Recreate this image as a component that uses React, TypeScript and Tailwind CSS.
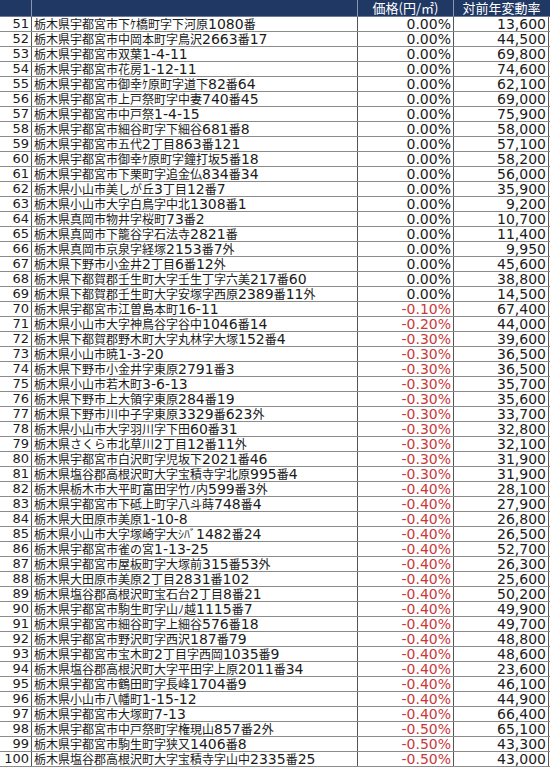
const rows: [number, string, string, string][] = [
  [51, "栃木県宇都宮市下ｹ橋町字下河原1080番", "0.00%", "13,600"],
  [52, "栃木県宇都宮市中岡本町字鳥沢2663番17", "0.00%", "44,500"],
  [53, "栃木県宇都宮市双葉1-4-11", "0.00%", "69,800"],
  [54, "栃木県宇都宮市花房1-12-11", "0.00%", "74,600"],
  [55, "栃木県宇都宮市御幸ｹ原町字道下82番64", "0.00%", "62,100"],
  [56, "栃木県宇都宮市上戸祭町字中妻740番45", "0.00%", "69,000"],
  [57, "栃木県宇都宮市中戸祭1-4-15", "0.00%", "75,900"],
  [58, "栃木県宇都宮市細谷町字下細谷681番8", "0.00%", "58,000"],
  [59, "栃木県宇都宮市五代2丁目863番121", "0.00%", "57,100"],
  [60, "栃木県宇都宮市御幸ｹ原町字鐘打坂5番18", "0.00%", "58,200"],
  [61, "栃木県宇都宮市下栗町字追金仏834番34", "0.00%", "56,000"],
  [62, "栃木県小山市美しが丘3丁目12番7", "0.00%", "35,900"],
  [63, "栃木県小山市大字白鳥字中北1308番1", "0.00%", "9,200"],
  [64, "栃木県真岡市物井字桜町73番2", "0.00%", "10,700"],
  [65, "栃木県真岡市下籠谷字石法寺2821番", "0.00%", "11,400"],
  [66, "栃木県真岡市京泉字経塚2153番7外", "0.00%", "9,950"],
  [67, "栃木県下野市小金井2丁目6番12外", "0.00%", "45,600"],
  [68, "栃木県下都賀郡壬生町大字壬生丁字六美217番60", "0.00%", "38,800"],
  [69, "栃木県下都賀郡壬生町大字安塚字西原2389番11外", "0.00%", "14,500"],
  [70, "栃木県宇都宮市江曽島本町16-11", "-0.10%", "67,400"],
  [71, "栃木県小山市大字神鳥谷字谷中1046番14", "-0.20%", "44,000"],
  [72, "栃木県下都賀郡野木町大字丸林字大塚152番4", "-0.30%", "39,600"],
  [73, "栃木県小山市暁1-3-20", "-0.30%", "36,500"],
  [74, "栃木県下野市小金井字東原2791番3", "-0.30%", "36,500"],
  [75, "栃木県小山市若木町3-6-13", "-0.30%", "35,700"],
  [76, "栃木県下野市上大領字東原284番19", "-0.30%", "35,600"],
  [77, "栃木県下野市川中子字東原3329番623外", "-0.30%", "33,700"],
  [78, "栃木県小山市大字羽川字下田60番31", "-0.30%", "32,800"],
  [79, "栃木県さくら市北草川2丁目12番11外", "-0.30%", "32,100"],
  [80, "栃木県宇都宮市白沢町字児坂下2021番46", "-0.30%", "31,900"],
  [81, "栃木県塩谷郡高根沢町大字宝積寺字北原995番4", "-0.30%", "31,900"],
  [82, "栃木県栃木市大平町富田字竹ﾉ内599番3外", "-0.40%", "28,100"],
  [83, "栃木県宇都宮市下砥上町字八斗蒔748番4", "-0.40%", "27,900"],
  [84, "栃木県大田原市美原1-10-8", "-0.40%", "26,800"],
  [85, "栃木県小山市大字塚崎字大ｼﾊﾞ1482番24", "-0.40%", "26,500"],
  [86, "栃木県宇都宮市雀の宮1-13-25", "-0.40%", "52,700"],
  [87, "栃木県宇都宮市屋板町字大塚前315番53外", "-0.40%", "26,300"],
  [88, "栃木県大田原市美原2丁目2831番102", "-0.40%", "25,600"],
  [89, "栃木県塩谷郡高根沢町宝石台2丁目8番21", "-0.40%", "50,200"],
  [90, "栃木県宇都宮市駒生町字山ﾉ越1115番7", "-0.40%", "49,900"],
  [91, "栃木県宇都宮市細谷町字上細谷576番18", "-0.40%", "49,700"],
  [92, "栃木県宇都宮市野沢町字西沢187番79", "-0.40%", "48,800"],
  [93, "栃木県宇都宮市宝木町2丁目字西岡1035番9", "-0.40%", "48,600"],
  [94, "栃木県塩谷郡高根沢町大字平田字上原2011番34", "-0.40%", "23,600"],
  [95, "栃木県宇都宮市鶴田町字長峰1704番9", "-0.40%", "46,100"],
  [96, "栃木県小山市八幡町1-15-12", "-0.40%", "44,900"],
  [97, "栃木県宇都宮市大塚町7-13", "-0.40%", "66,400"],
  [98, "栃木県宇都宮市中戸祭町字権現山857番2外", "-0.50%", "65,100"],
  [99, "栃木県宇都宮市駒生町字狭又1406番8", "-0.50%", "43,300"],
  [100, "栃木県塩谷郡高根沢町大字宝積寺字山中2335番25", "-0.50%", "43,000"],
];

// kanji/kana runs get the CJK font at 12px, digits and signs stay in DejaVu
function Addr({ text }: { text: string }) {
  const parts = text.split(/([\u3000-\u9fff\uff61-\uff9f]+)/).filter(Boolean);
  return (
    <>
      {parts.map((p, i) =>
        /[\u3000-\u9fff\uff61-\uff9f]/.test(p) ? (
          <span key={i} className="text-[12px]" style={{ fontFamily: '"Noto Sans CJK JP", sans-serif' }}>
            {p}
          </span>
        ) : (
          <span key={i}>{p}</span>
        )
      )}
    </>
  );
}

export default function App() {
  return (
    <div
      className="w-[550px] bg-white text-[#1a1a1a] text-[14px]"
      style={{ fontFamily: '"DejaVu Sans", "Noto Sans CJK JP", sans-serif' }}
    >
      <div
        className="flex h-[17px] bg-[#203864] text-white text-[13px] leading-[16px] border-b border-[#6b7a99]"
        style={{ fontFamily: '"Noto Sans CJK JP", sans-serif' }}
      >
        <div className="w-[32px] border-r border-[#8a96b0]"></div>
        <div className="w-[326px] border-r border-[#8a96b0]"></div>
        <div className="w-[96px] border-r border-[#8a96b0] text-center">価格(円/㎡)</div>
        <div className="w-[95px] text-center">対前年変動率</div>
      </div>
      {rows.map(([no, addr, pct, price]) => (
        <div key={no} className="flex h-[15px] leading-[14px] border-b border-[#8c8c8c] whitespace-nowrap">
          <div className="w-[32px] border-r border-[#555] text-right pr-[2px] text-[13px]">{no}</div>
          <div className="w-[326px] border-r border-[#555] pl-[2px] overflow-hidden">
            <Addr text={addr} />
          </div>
          <div
            className={
              "w-[96px] border-r border-[#555] text-right pr-[2px] " +
              (pct.startsWith("-") ? "text-[#c9393b]" : "")
            }
          >
            {pct}
          </div>
          <div className="w-[95px] text-right pr-[2px] border-r border-[#555]">{price}</div>
        </div>
      ))}
    </div>
  );
}
